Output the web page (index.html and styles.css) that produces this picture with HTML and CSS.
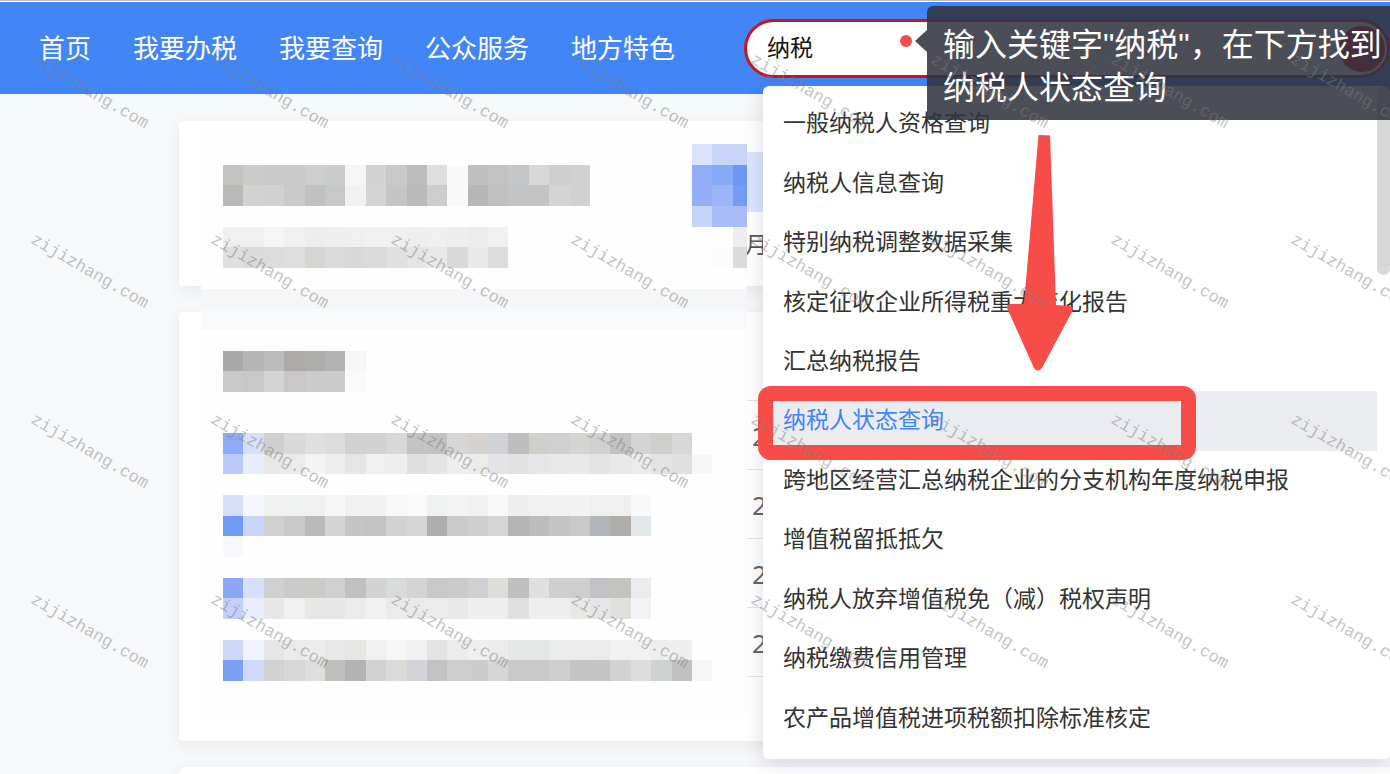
FILE: index.html
```html
<!DOCTYPE html>
<html lang="zh-CN">
<head>
<meta charset="utf-8">
<title>我要查询</title>
<link rel="stylesheet" href="styles.css">
</head>
<body>
<div class="page">
  <header class="header">
    <nav class="nav">
      <a href="#">首页</a>
      <a href="#">我要办税</a>
      <a href="#">我要查询</a>
      <a href="#">公众服务</a>
      <a href="#">地方特色</a>
    </nav>
    <form class="search">
      <input class="search-input" type="text" value="纳税" aria-label="搜索">
      <button class="search-button" type="button" aria-label="搜索">
        <svg width="22" height="22" viewBox="0 0 22 22" fill="none" stroke="#fff" stroke-opacity=".25" stroke-width="2"><path d="M4 15l7-5l7 5"/></svg>
      </button>
    </form>
  </header>

  <main class="content">
    <section class="card profile">
      <span class="tag"></span>
      <p class="month">月</p>
    </section>
    <section class="card records">
      <ul class="dates">
        <li>2</li>
        <li>2</li>
        <li>2</li>
        <li>2</li>
      </ul>
    </section>
    <section class="card next"></section>
    <div class="mask">
      <div class="mask-gap"></div>
      <svg class="mosaic" id="mosaic" viewBox="0 0 25.7 26" preserveAspectRatio="none" shape-rendering="crispEdges"></svg>
    </div>
  </main>

  <div class="dropdown">
    <ul class="options">
      <li><a href="#">一般纳税人资格查询</a></li>
      <li><a href="#">纳税人信息查询</a></li>
      <li><a href="#">特别纳税调整数据采集</a></li>
      <li><a href="#">核定征收企业所得税重大变化报告</a></li>
      <li><a href="#">汇总纳税报告</a></li>
      <li><a class="active" href="#">纳税人状态查询</a></li>
      <li><a href="#">跨地区经营汇总纳税企业的分支机构年度纳税申报</a></li>
      <li><a href="#">增值税留抵抵欠</a></li>
      <li><a href="#">纳税人放弃增值税免（减）税权声明</a></li>
      <li><a href="#">纳税缴费信用管理</a></li>
      <li><a href="#">农产品增值税进项税额扣除标准核定</a></li>
    </ul>
    <div class="scroll-thumb"></div>
  </div>

  <span class="dot"></span>
  <div class="tip">输入关键字"纳税"，在下方找到<br>纳税人状态查询</div>
  <svg class="arrow" width="66" height="236" viewBox="0 0 66 236" fill="#f74c47"><path d="M31.500 0L43 .5L49 170L63 171Q67 172 65.500 176L35 233Q31 238 27 233L.5 174Q-1 169 4 169L17 169Z"/></svg>
  <div class="highlight-box"></div>
  <div class="watermark" id="watermark" aria-hidden="true"></div>
</div>
<script src="app.js"></script>
</body>
</html>
```
FILE: styles.css
```css
* {
  box-sizing: border-box;
}

body {
  margin: 0;
  background: #f6f8fa;
  font-family: "Noto Sans CJK SC", sans-serif;
  color: #333;
}

ul,
p {
  margin: 0;
  padding: 0;
  list-style: none;
}

a {
  color: inherit;
  text-decoration: none;
}

.page {
  position: relative;
  height: 100vh;
  overflow: hidden;
}

.header {
  display: flex;
  align-items: center;
  height: 94px;
  padding-top: 2px;
  border-top: 1px solid #bcbcbc;
  box-shadow: inset 0 1px #fff;
  background: #4285f6;
}

.nav {
  display: flex;
  flex: none;
  gap: 42px;
  width: 744px;
  padding: 0 0 4px 39px;
  color: #fff;
  font-size: 26px;
  line-height: 40px;
  white-space: nowrap;
}

.search {
  display: flex;
  flex: 1;
  align-items: center;
  height: 59px;
  padding: 0 2px 0 20px;
  border: 3px solid #c8141f;
  border-radius: 30px;
  background: #fff;
}

.search-input {
  flex: 1;
  min-width: 0;
  padding: 0 0 5px;
  border: 0;
  outline: 0;
  background: none;
  font: 23px/32px "Noto Sans CJK SC", sans-serif;
  color: #111;
}

.search-button {
  display: grid;
  place-items: center;
  width: 46px;
  height: 46px;
  padding: 0;
  border: 0;
  border-radius: 50%;
  background: #c8141f;
}

.content {
  position: relative;
  display: flex;
  flex-direction: column;
  gap: 26px;
  padding: 27px 0 0 179px;
}

.card {
  border-radius: 4px 0 0 4px;
  background: #fff;
  box-shadow: 0 4px 14px rgba(60, 65, 75, 0.08);
}

.profile {
  height: 165px;
  padding: 31px 0 0 566px;
}

.tag {
  display: block;
  width: 80px;
  height: 60px;
  background: #dbe5fd;
}

.month {
  padding-top: 15px;
  font-size: 23px;
  line-height: 32px;
  color: #555;
}

.records {
  height: 429px;
  padding: 88px 0 0 568px;
}

.dates {
  border-top: 1px solid #e4e5e9;
}

.dates li {
  height: 69px;
  padding-left: 5px;
  border-bottom: 1px solid #e4e5e9;
  font: 26px/70px "Noto Sans", sans-serif;
  color: #666;
}

.next {
  height: 40px;
  border-radius: 8px 0 0 0;
}

/* Pixelated area that hides account data across both cards */
.mask {
  position: absolute;
  top: 30px;
  left: 201px;
  width: 546px;
  height: 593px;
  padding: 20px 0 0 22px;
  background: #fefefe;
}

.mask-gap {
  position: absolute;
  top: 165px;
  left: 0;
  width: 100%;
  height: 41px;
  border-top: 20px solid #f5f6f7;
  background: #f8fafc;
}

.mosaic {
  position: relative;
  display: block;
  width: 524px;
  height: 537px;
}

.dropdown {
  position: absolute;
  top: 86px;
  left: 763px;
  right: 0;
  height: 673px;
  padding: 8px 13px 11px 0;
  border-radius: 6px;
  background: #fff;
  box-shadow: 0 4px 20px rgba(60, 60, 120, 0.18);
}

.options {
  display: grid;
  grid-auto-rows: 1fr;
  height: 100%;
}

.options li {
  display: grid;
}

.options a {
  display: flex;
  align-items: center;
  padding: 0 0 5px 20px;
  font-size: 23px;
  line-height: 32px;
  white-space: nowrap;
}

.options .active {
  background: #ebecf0;
  color: #4285f6;
}

.scroll-thumb {
  position: absolute;
  top: 0;
  right: 0;
  width: 13px;
  height: 189px;
  border-radius: 7px;
  background: #d8d8d8;
}

.dot {
  position: absolute;
  top: 35px;
  left: 900px;
  width: 12px;
  height: 12px;
  border-radius: 50%;
  background: #f74c47;
}

.tip {
  position: absolute;
  top: 6px;
  left: 927px;
  right: 0;
  height: 114px;
  padding: 18px 0 0 16px;
  border-radius: 6px 0 0 0;
  background: rgba(48, 50, 62, 0.87);
  color: #fff;
  font: 32px/43px "Liberation Sans", "Noto Sans CJK SC", sans-serif;
  white-space: nowrap;
}

.tip::before {
  content: "";
  position: absolute;
  top: 24px;
  left: -12px;
  border: solid transparent;
  border-width: 11px 12px 11px 0;
  border-right-color: rgba(48, 50, 62, 0.87);
}

.arrow {
  position: absolute;
  top: 135px;
  left: 1007px;
}

.highlight-box {
  position: absolute;
  top: 386px;
  left: 758px;
  width: 438px;
  height: 74px;
  border: 15px solid #f74c47;
  border-radius: 13px;
}

.watermark {
  position: absolute;
  top: 2px;
  left: -1px;
  display: grid;
  grid-template-columns: repeat(8, 180px);
  grid-auto-rows: 180px;
  place-items: center;
  pointer-events: none;
  font: 17px/20px "Liberation Mono", monospace;
  color: rgba(125, 125, 125, 0.48);
}

.watermark span {
  transform: rotate(30deg);
}
```
FILE: app.js
```js
// Mosaic cells: row index -> list of runs, each with its first column and colours.
const rows = {
  0: [[23, "dbe3fc c8d4f8 c8d4f8"]],
  1: [[0, "c3c3c1 cccbc9 c8cac9 c9c9c9 cccfce cacccb f8f6f4 d2d2d2 c9c9c9 bcbebd dedede f9f9f9 bfbfbf c2c2c2 c5c6c7 d8d8d8 cfcfcf d0d1d3"], [23, "92aef8 86aaf6 6c98f4"]],
  2: [[0, "b9b9b7 d3d2d0 d0d2d1 cccac8 c0c1c3 c6c7c9 f3f1ef d2d4d6 c5c5c5 bbbab8 cccdcf f9f9f9 b9b7b5 c0c0c0 c2c4c6 c4c3c1 d4d4d4 d0d1d3"], [23, "92aef8 9bb6f8 739df5"]],
  3: [[23, "c7d4f9 a8bdf8 a8bdf8"]],
  4: [[0, "efefef eeefef f5f5f5 f0f0f0 ededed eeeeee eef0ef f1f1f1 eff0ef efeded efefef ededed ebebeb f0f0f0"], [25, "ededed"]],
  5: [[0, "dfdfdf dbdbd9 dcdcdc dcdee0 d7d5d2 dbdbdb d8d8d8 dadada e0e0de e4e5e7 eae9e9 d9d9d9 e8eaea dcdcdb"], [24, "fcfcfa dbdbdb"]],
  10: [[0, "a9a9a9 b7b5b3 b9bcbb acaaa8 adadab b1b2b4 f6f6f6"]],
  11: [[0, "cac8c8 c7c7c7 d2d4d5 c8c6c6 cbcbcb cacccd fafafa"]],
  14: [[0, "8ea9f6 d6e0fb cfcfcd d8d9da dfdfdf dcdcdc d2d0d0 d1d1d1 d8d8d8 c4c3c1 c2c2c2 d4d6d8 d6d2d0 d0d2d5 bebec0 cfcfcc cfd1d0 d3d5d0 d0d0d0 c4c3c1 d2d4d6 d0cecb d5d7d9"]],
  15: [[0, "bccaf9 e8edfd e8e8e6 eaeaea f4f4f4 eeeeee e5e5e6 eef0ef eeeeee dfdfdf e5e4e3 eeeeee edebe9 e4e4e7 e2e2e2 e5e5e7 e8e8e8 e9e9e9 e1e4e3 e8e8e8 ebebeb e3e3e3 e0e0e0 f6f6f4"]],
  17: [[0, "d7dffb f4f7fe f0f0ee eff1f0 f0f0f0 f6f6f6 f0f0f0 f1f1f1 f7f9f8 fafafa eff1f0 f3f3f3 f1f1f1 f7f9f8 eeeeee f0f0ee f1f1f1 f2f2f0 efefef efefef f8faf9"]],
  18: [[0, "709af5 c8d5fa d1cfcf cbc9c7 babab8 d4d4d4 c7c5c3 c1c3c5 d2d2d2 d6d6d4 aeaeae cdcbc9 cfcfcf d5d5d5 b5b5b5 bbbdba c5c5c5 cbc9c7 b2b5ba b0aeab e2e7e9"]],
  19: [[0, "f8f9fe"]],
  21: [[0, "88a7f6 d5e0fb d0d0d0 cbcbcb cdcbc8 d0d0d0 c0c0c0 d4d2d2 d7dbd9 d4d4d2 c8c8c8 cbcbcb d0d0d2 dfddda bfbfbf dde0df cfcfcd cecece c1c2c5 c5c3c0 e9ebee"]],
  22: [[0, "c5d0fa e9edfd e7e7e7 f0f0f0 e7e7e5 e7e7e5 ebebed f1f1f1 eaeaea ebe9e9 ebebeb e6e9e8 eeeeee eeeeee e0e0e0 eeeeee eeeeee e8e8e4 e6e6e8 e2e0de f2f3f6"]],
  24: [[0, "d0d8f9 eff3fd e5e5e5 eaeaea ededed e8e8e8 e6e6e3 efefef f6f6f6 f1f1f1 e3e3e3 ebebeb efefef ececec e4e7e6 e4e6e5 eaecea ebebeb eaeaea f1f1f1 f1f1f1 eeeeee eeeeee"]],
  25: [[0, "7a9ff5 cfdafb d2d2d2 d8d8db dededc c1bfbc b2b3b5 d0d2d4 dcdad8 d2d4d7 c1c3c2 cfcdcb cbcdcc d7d5d5 c9c9c9 c9c9c9 cdd0cf c6c4c4 c6c4c4 d3d3d3 dedcdc ced2d0 c0c1c3 f6f6f4"]]
};

const mosaic = document.getElementById("mosaic");
for (const [y, runs] of Object.entries(rows)) {
  for (const [start, colours] of runs) {
    colours.split(" ").forEach((colour, i) => {
      const cell = document.createElementNS("http://www.w3.org/2000/svg", "rect");
      cell.setAttribute("x", start + i);
      cell.setAttribute("y", y);
      cell.setAttribute("width", 1);
      cell.setAttribute("height", 1);
      cell.setAttribute("fill", "#" + colour);
      mosaic.append(cell);
    });
  }
}

const watermark = document.getElementById("watermark");
for (let i = 0; i < 32; i++) {
  const mark = document.createElement("span");
  mark.textContent = "zijizhang.com";
  watermark.append(mark);
}
```
